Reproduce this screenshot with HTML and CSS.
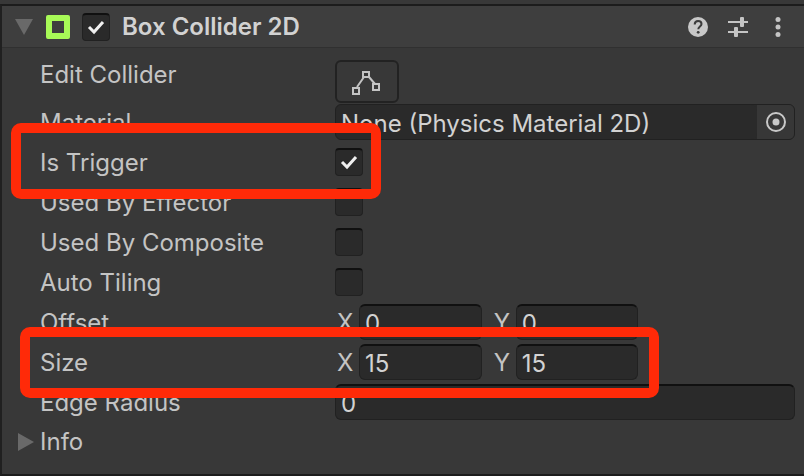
FILE: index.html
```
<!DOCTYPE html>
<html lang="en">
<head>
    <meta charset="utf-8">
    <title>Box Collider 2D</title>
    <link rel="stylesheet" href="styles.css">
</head>
<body>

<main class="inspector">
    <header class="header">
        <button class="fold" type="button" aria-label="Collapse component">
            <svg width="18" height="16" viewBox="0 0 18 16"><path d="M0 0h18L9 16z" fill="#696969"/></svg>
        </button>
        <svg class="component-icon" width="24" height="24" viewBox="0 0 24 24">
            <path fill-rule="evenodd" fill="#a8fa57" d="M2 0h20q2 0 2 2v20q0 2-2 2H2q-2 0-2-2V2q0-2 2-2zM6 6v12h12V6z"/>
        </svg>
        <span class="check">
            <input type="checkbox" id="enabled" checked>
            <svg width="20" height="16" viewBox="0 0 20 16"><path d="M3 8l5 5L17 3" fill="none" stroke="#f0f0f0" stroke-width="3"/></svg>
        </span>
        <label class="title" for="enabled">Box Collider 2D</label>
        <div class="tools">
            <button type="button" aria-label="Help">
                <svg width="20" height="20" viewBox="0 0 20 20">
                    <circle cx="10" cy="10" r="10" fill="#c8c8c8"/>
                    <path d="M6.7 7.5C6.7 5.300 8 4 10.100 4s3.400 1.300 3.400 3c0 2.400-3.200 2.600-3.200 5.200" fill="none" stroke="#3c3c3c" stroke-width="2"/>
                    <circle cx="10.200" cy="15.300" r="1.400" fill="#3c3c3c"/>
                </svg>
            </button>
            <button type="button" aria-label="Presets">
                <svg width="20" height="20" viewBox="0 0 20 20" fill="#c4c4c4">
                    <path d="M0 4h12v2H0zM16 4h4v2h-4zM0 14h6v2H0zM10 14h10v2H10z"/>
                    <rect x="12" y="0" width="4" height="10" rx="1"/>
                    <rect x="6" y="10" width="4" height="10" rx="1"/>
                </svg>
            </button>
            <button type="button" aria-label="More options">
                <svg width="20" height="20" viewBox="0 0 20 20" fill="#c4c4c4">
                    <circle cx="10" cy="2.500" r="2.500"/>
                    <circle cx="10" cy="10" r="2.500"/>
                    <circle cx="10" cy="17.500" r="2.500"/>
                </svg>
            </button>
        </div>
    </header>

    <form class="properties">
        <div class="row row-edit">
            <label for="edit">Edit Collider</label>
            <button class="edit-button" type="button" id="edit">
                <svg width="30" height="26" viewBox="0 0 30 26" fill="none" stroke="#c4c4c4" stroke-width="2">
                    <path d="M5 18L12 8M17 8l6 7"/>
                    <rect x="11" y="3" width="6" height="5"/>
                    <rect x="1" y="19" width="6" height="6"/>
                    <rect x="21" y="15" width="6" height="6"/>
                </svg>
            </button>
        </div>
        <div class="row">
            <label for="material">Material</label>
            <div class="object-field">
                <input type="text" id="material" value="None (Physics Material 2D)">
                <button type="button" aria-label="Select material">
                    <svg width="20" height="20" viewBox="0 0 20 20">
                        <circle cx="10" cy="10" r="9" fill="none" stroke="#c8c8c8" stroke-width="2"/>
                        <circle cx="10" cy="10" r="3.500" fill="#c8c8c8"/>
                    </svg>
                </button>
            </div>
        </div>
        <div class="row highlight highlight-trigger">
            <label for="trigger">Is Trigger</label>
            <span class="check">
                <input type="checkbox" id="trigger" checked>
                <svg width="20" height="16" viewBox="0 0 20 16"><path d="M3 8l5 5L17 3" fill="none" stroke="#f0f0f0" stroke-width="3"/></svg>
            </span>
        </div>
        <div class="row">
            <label for="effector">Used By Effector</label>
            <span class="check"><input type="checkbox" id="effector"></span>
        </div>
        <div class="row">
            <label for="composite">Used By Composite</label>
            <span class="check"><input type="checkbox" id="composite"></span>
        </div>
        <div class="row">
            <label for="tiling">Auto Tiling</label>
            <span class="check"><input type="checkbox" id="tiling"></span>
        </div>
        <div class="row">
            <span class="name">Offset</span>
            <div class="vector">
                <div class="axis"><label for="offset-x">X</label><input type="text" id="offset-x" value="0"></div>
                <div class="axis"><label for="offset-y">Y</label><input type="text" id="offset-y" value="0"></div>
            </div>
        </div>
        <div class="row highlight highlight-size">
            <span class="name">Size</span>
            <div class="vector">
                <div class="axis"><label for="size-x">X</label><input type="text" id="size-x" value="15"></div>
                <div class="axis"><label for="size-y">Y</label><input type="text" id="size-y" value="15"></div>
            </div>
        </div>
        <div class="row">
            <label for="radius">Edge Radius</label>
            <input type="text" id="radius" value="0">
        </div>
        <div class="info">
            <button class="fold" type="button" id="info" aria-label="Expand info">
                <svg width="16" height="18" viewBox="0 0 16 18"><path d="M0 0v18l16-9z" fill="#696969"/></svg>
            </button>
            <label for="info">Info</label>
        </div>
    </form>
</main>

</body>
</html>
```
FILE: styles.css
```
*, *::after {
    box-sizing: border-box;
}
body {
    margin: 0;
    padding-top: 4px;
    background-color: #383838;
    color: #c4c4c4;
    font-family: Inter, "Liberation Sans", sans-serif;
    font-size: 24px;
    line-height: 30px;
}
svg {
    display: block;
}
button {
    padding: 0;
    border: none;
    background: none;
    color: inherit;
}
.inspector {
    border-top: 2px solid #1c1c1c;
    border-bottom: 2px solid #1c1c1c;
    border-left: 2px solid #202020;
}
.header {
    display: flex;
    align-items: center;
    height: 42px;
    padding: 0 16px 0 12px;
    background-color: #3e3e3e;
    border-bottom: 1px solid #303030;
}
.fold {
    display: flex;
    justify-content: center;
    width: 20px;
}
.component-icon {
    margin: 0 12px;
}
.title {
    margin-left: 12px;
    font-weight: 600;
    color: #d2d2d2;
}
.tools {
    display: flex;
    gap: 20px;
    margin-left: auto;
}
.properties {
    padding: 12px 9px 12px 0;
}
.row {
    position: relative;
    display: grid;
    grid-template-columns: 295px 1fr;
    align-items: center;
    height: 40px;
    padding-left: 38px;
}
.row label, .name {
    padding-top: 2px;
}
.row-edit {
    align-items: start;
    height: 42px;
}
.row-edit label {
    padding-top: 0;
}
.edit-button {
    display: flex;
    align-items: center;
    justify-content: center;
    width: 64px;
    height: 43px;
    border: 2px solid #222;
    border-radius: 6px;
}
input {
    margin: 0;
    background-color: #2a2a2a;
    border: 1px solid #212121;
    border-top: 2px solid #101010;
    border-radius: 6px;
    color: #d2d2d2;
    font: inherit;
}
input[type="text"] {
    width: 100%;
    min-width: 0;
    height: 36px;
    padding: 1px 5px 0;
}
input[type="checkbox"] {
    appearance: none;
    width: 28px;
    height: 28px;
    border-radius: 4px;
}
.check {
    display: grid;
    place-items: center;
    width: 28px;
    height: 28px;
}
.check > * {
    grid-area: 1 / 1;
}
.check svg {
    pointer-events: none;
}
.object-field {
    display: flex;
    height: 36px;
    background-color: #2a2a2a;
    border: 1px solid #212121;
    border-radius: 6px;
    overflow: hidden;
}
.object-field input[type="text"] {
    height: 34px;
    padding-top: 2px;
    border: none;
}
.object-field button {
    display: flex;
    flex: none;
    align-items: center;
    justify-content: center;
    width: 37px;
    background-color: #373737;
}
.vector {
    display: grid;
    grid-template-columns: repeat(3, 1fr);
    gap: 10px;
}
.axis {
    display: grid;
    grid-template-columns: 22px 1fr;
    align-items: center;
    padding-left: 2px;
}
.info {
    display: flex;
    align-items: center;
    gap: 4px;
    height: 40px;
    padding-left: 14px;
}

/* red frames around the important rows */
.highlight::after {
    content: "";
    position: absolute;
    z-index: 1;
    border: 10px solid #ff2a08;
    border-radius: 10px;
    pointer-events: none;
}
.highlight-trigger::after {
    top: -19px;
    bottom: -17px;
    left: 9px;
    width: 370px;
}
.highlight-size::after {
    top: -15px;
    bottom: -16px;
    left: 18px;
    width: 639px;
}
```
